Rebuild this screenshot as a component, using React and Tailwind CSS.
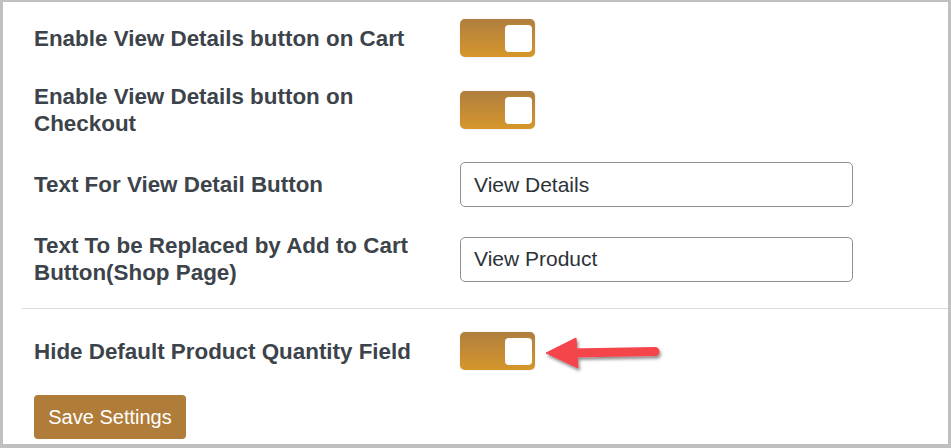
import React from 'react';

const font = { fontFamily: '"Liberation Sans", Arial, sans-serif' };

function Toggle() {
  return (
    <div className="relative w-[75px] h-[38px] rounded-[5px] bg-gradient-to-b from-[#b07f3d] to-[#d6962a] shadow-[0_0_1px_rgba(0,0,0,0.3)] shrink-0">
      <div className="absolute right-[3px] top-[6px] w-[27px] h-[27px] rounded-[4px] bg-white" />
    </div>
  );
}

function Field({ value }) {
  return (
    <div className="w-[393px] h-[45px] border border-[#8c8f94] rounded-[5px] px-[13px] flex items-center text-[21px] text-[#2c3338]">
      {value}
    </div>
  );
}

function Row({ label, h, children }) {
  return (
    <div className={`flex items-center ${h}`}>
      <div className="w-[426px] pr-2 text-[22.4px] leading-[27px] font-bold text-[#3c434a]">{label}</div>
      {children}
    </div>
  );
}

export default function App() {
  return (
    <div className="w-[951px] h-[448px] bg-white border-[3px] border-t-2 border-b-4 border-[#c0c0c0] overflow-hidden" style={font}>
      <div className="pl-[31px]">
        <Row label="Enable View Details button on Cart" h="h-[72px]"><Toggle /></Row>
        <Row label={<>Enable View Details button on<br />Checkout</>} h="h-[72px]"><Toggle /></Row>
        <Row label="Text For View Detail Button" h="h-[77px]"><Field value="View Details" /></Row>
        <Row label={<>Text To be Replaced by Add to Cart<br />Button(Shop Page)</>} h="h-[72px]"><Field value="View Product" /></Row>
      </div>
      <div className="ml-[19px] mt-[13px] border-t border-[#dcdcde]" />
      <div className="pl-[31px]">
        <div className="relative">
          <Row label="Hide Default Product Quantity Field" h="h-[84px]"><Toggle /></Row>
          <svg className="absolute left-[506px] top-[21px]" width="130" height="45" viewBox="0 0 130 45">
            <defs>
              <filter id="sh" x="-20%" y="-50%" width="140%" height="200%">
                <feDropShadow dx="1.5" dy="2.5" stdDeviation="1.5" floodColor="#000" floodOpacity="0.45" />
              </filter>
            </defs>
            <g filter="url(#sh)" fill="#f4444c" stroke="#f4444c">
              <line x1="30" y1="23" x2="115" y2="21.5" strokeWidth="9" strokeLinecap="round" />
              <polygon points="6,23 36,8 38,38" strokeWidth="1" strokeLinejoin="round" />
            </g>
          </svg>
        </div>
        <button className="mt-[2px] w-[152px] h-[44px] rounded-[4px] bg-[#b07c3a] text-white text-[20px]" style={font}>
          Save Settings
        </button>
      </div>
    </div>
  );
}
